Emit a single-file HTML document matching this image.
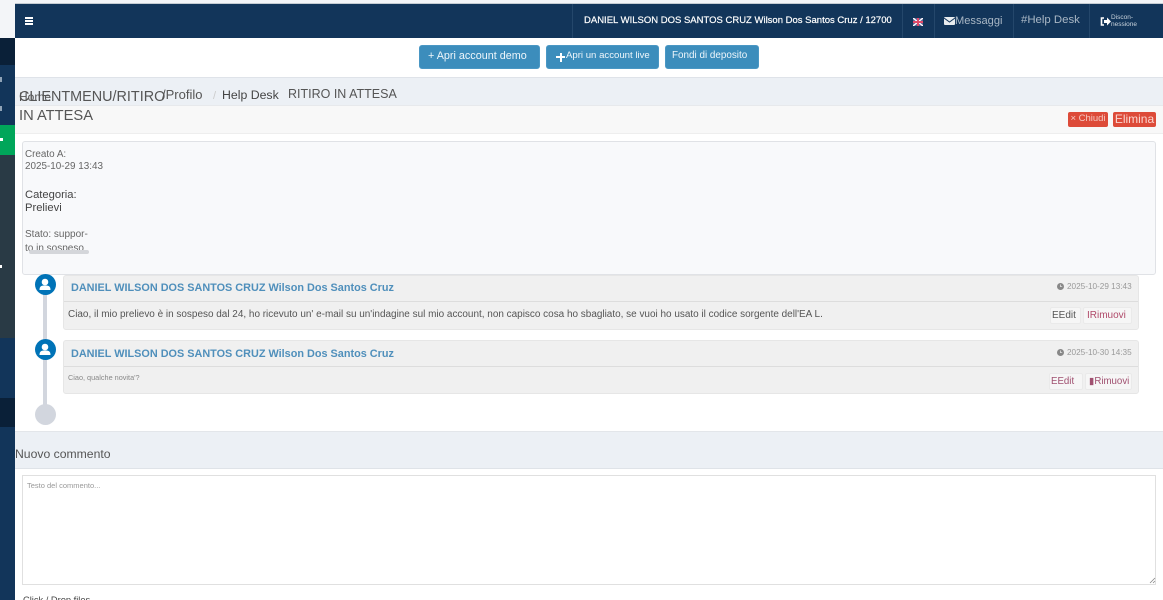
<!DOCTYPE html>
<html><head><meta charset="utf-8">
<style>
html,body{margin:0;padding:0;width:1163px;height:600px;overflow:hidden;background:#fff}
body{font-family:"Liberation Sans",sans-serif;color:#555;position:relative}
.a{position:absolute;white-space:nowrap}
.b{position:absolute;background:#3c8dbc;border:1px solid #4a97c4;border-radius:3px;color:#eef6fb;box-sizing:border-box;white-space:nowrap}
.sep{position:absolute;top:4px;width:1px;height:34px;background:#24476b}
.panel{position:absolute;left:63px;width:1076px;background:#f0f0f0;border:1px solid #e6e6e6;border-radius:3px;box-sizing:border-box}
.name{position:absolute;left:71px;font-size:10.86px;line-height:14px;font-weight:bold;color:#4f8fbb;white-space:nowrap}
.av{position:absolute;left:34.500px;width:21px;height:21px;border-radius:50%;background:#0073b7}
.btn2{position:absolute;background:#f6f6f6;border:1px solid #eaeaea;border-radius:2px;box-sizing:border-box;font-size:10px;line-height:15px;height:17px;white-space:nowrap}
</style></head><body>
<!-- sidebar -->
<div class="a" style="left:0;top:0;width:15px;height:38px;background:#f3f5f8"></div>
<div class="a" style="left:0;top:38px;width:15px;height:27px;background:#0a2038"></div>
<div class="a" style="left:0;top:65px;width:15px;height:60px;background:#12355a"></div>
<div class="a" style="left:0;top:125px;width:15px;height:30px;background:#00a65a"></div>
<div class="a" style="left:0;top:155px;width:15px;height:183px;background:#293a45"></div>
<div class="a" style="left:0;top:338px;width:15px;height:60px;background:#12355a"></div>
<div class="a" style="left:0;top:398px;width:15px;height:29px;background:#0a2038"></div>
<div class="a" style="left:0;top:427px;width:15px;height:173px;background:#12355a"></div>
<div class="a" style="left:0;top:77px;width:2px;height:5px;background:#8fa3b7"></div>
<div class="a" style="left:0;top:106px;width:2px;height:5px;background:#8fa3b7"></div>
<div class="a" style="left:0;top:138px;width:3px;height:3px;background:#fff"></div>
<div class="a" style="left:0;top:265px;width:2px;height:3px;background:#fff"></div>

<!-- top bar -->
<div class="a" style="left:0;top:0;width:1163px;height:4px;background:#f3f5f8"></div>
<div class="a" style="left:15px;top:3px;width:1148px;height:1px;background:#c5ccd3"></div>
<div class="a" style="left:15px;top:4px;width:1148px;height:34px;background:#12355a"></div>
<div class="a" style="left:25px;top:17px;width:8px;height:2px;background:#fff;box-shadow:0 3px 0 #fff,0 6px 0 #fff"></div>
<div class="sep" style="left:572px"></div>
<div class="sep" style="left:902px"></div>
<div class="sep" style="left:934px"></div>
<div class="sep" style="left:1013px"></div>
<div class="sep" style="left:1089px"></div>
<div class="a" style="left:584px;top:15px;font-size:9.500px;line-height:12px;color:#fff;font-weight:400;-webkit-text-stroke:.2px #fff">DANIEL WILSON DOS SANTOS CRUZ Wilson Dos Santos Cruz / 12700</div>
<svg class="a" style="left:913px;top:18px" width="10" height="8" viewBox="0 0 10 8"><rect width="10" height="8" fill="#5b5f8f"/><path d="M0 0L10 8M10 0L0 8" stroke="#fff" stroke-width="1.400"/><path d="M5 0V8M0 4H10" stroke="#e04a6a" stroke-width="2"/></svg>
<svg class="a" style="left:944px;top:17px" width="11" height="8" viewBox="0 0 11 8"><rect width="11" height="8" rx="1" fill="#e8ecef"/><path d="M0 1L5.500 5L11 1" stroke="#12355a" fill="none"/></svg>
<div class="a" style="left:955px;top:14px;font-size:11.100px;line-height:14px;color:#a9b7c5">Messaggi</div>
<div class="a" style="left:1021px;top:13px;font-size:11.400px;line-height:14px;color:#a9b7c5">#Help Desk</div>
<svg class="a" style="left:1100px;top:17px" width="11" height="9" viewBox="0 0 11 9"><path d="M4 1H1.500V8H4" stroke="#fff" stroke-width="1.600" fill="none"/><path d="M4 3H7V0.500L11 4.500L7 8.500V6H4Z" fill="#fff"/></svg>
<div class="a" style="left:1111px;top:15px;font-size:6.500px;line-height:6.500px;color:#c9d3dc">Discon-<br>nessione</div>

<!-- buttons -->
<div class="b" style="left:419px;top:45px;width:121px;height:24px;font-size:10.800px;line-height:20px;padding-left:8px">+ Apri account demo</div>
<div class="b" style="left:546px;top:45px;width:113px;height:24px;font-size:9.600px;line-height:19px;padding-left:19px">Apri un account live</div>
<div class="a" style="left:556px;top:56px;width:9px;height:2px;background:#fff"></div>
<div class="a" style="left:559.500px;top:52.500px;width:2px;height:9px;background:#fff"></div>
<div class="b" style="left:665px;top:45px;width:94px;height:24px;font-size:9.900px;line-height:20px;padding-left:6px">Fondi di deposito</div>

<!-- header band -->
<div class="a" style="left:15px;top:77px;width:1148px;height:28px;background:#ecf0f5;border-top:1px solid #dfe3e9;box-sizing:border-box"></div>
<div class="a" style="left:15px;top:105px;width:1148px;height:29px;background:#f8f8f8;border-top:1px solid #e7e9ec;border-bottom:1px solid #eee;box-sizing:border-box"></div>
<div class="a" style="left:19px;top:89px;font-size:14.400px;line-height:17px;color:#555">CLIENTMENU/RITIRO</div>
<div class="a" style="left:19px;top:90px;font-size:12px;line-height:14px;color:#555">Home</div>
<div class="a" style="left:19px;top:108px;font-size:14.700px;line-height:17px;color:#555">IN ATTESA</div>
<div class="a" style="left:162px;top:87px;font-size:13px;line-height:16px;color:#555">/Profilo</div>
<div class="a" style="left:213px;top:90px;font-size:11px;line-height:13px;color:#ccc">/</div>
<div class="a" style="left:222px;top:88px;font-size:12.300px;line-height:14px;color:#444">Help Desk</div>
<div class="a" style="left:288px;top:87px;font-size:12.500px;line-height:15px;color:#555">RITIRO IN ATTESA</div>
<div class="a" style="left:1068px;top:112px;width:40px;height:15px;background:#dd4b39;border-radius:2px;color:#f6c9c2;font-size:9.500px;line-height:14px;text-align:center">× Chiudi</div>
<div class="a" style="left:1113px;top:112px;width:43px;height:15px;background:#dd4b39;border-radius:2px;color:#fbd5cf;font-size:12px;line-height:15px;text-align:center">Elimina</div>

<!-- info box -->
<div class="a" style="left:22px;top:141px;width:1134px;height:134px;background:#f8f9fb;border:1px solid #e0e2e6;border-radius:3px;box-sizing:border-box"></div>
<div class="a" style="left:25px;top:149px;font-size:9.900px;line-height:12px;color:#666">Creato A:<br>2025-10-29 13:43</div>
<div class="a" style="left:25px;top:189px;font-size:11.200px;line-height:13px;color:#444">Categoria:<br>Prelievi</div>
<div class="a" style="left:25px;top:228px;font-size:10px;line-height:13.500px;color:#666">Stato: suppor-<br>to in sospeso</div>
<div class="a" style="left:29px;top:250px;width:60px;height:4px;background:#d4d6da;border-radius:2px"></div>

<!-- timeline -->
<div class="a" style="left:43px;top:290px;width:4px;height:120px;background:#d2d6de"></div>
<div class="av" style="top:274px"></div>
<div class="av" style="top:339px"></div>
<svg class="a" style="left:35px;top:274.500px" width="20" height="20" viewBox="0 0 20 20"><circle cx="10" cy="7" r="3.300" fill="#fff"/><path d="M4.500 15C4.500 11 6.500 10.500 10 10.500S15.500 11 15.500 15Z" fill="#fff"/></svg>
<svg class="a" style="left:35px;top:339.500px" width="20" height="20" viewBox="0 0 20 20"><circle cx="10" cy="7" r="3.300" fill="#fff"/><path d="M4.500 15C4.500 11 6.500 10.500 10 10.500S15.500 11 15.500 15Z" fill="#fff"/></svg>
<div class="a" style="left:34.500px;top:404px;width:21px;height:21px;border-radius:50%;background:#d2d6de"></div>

<div class="panel" style="top:275px;height:55px"></div>
<div class="a" style="left:64px;top:301px;width:1074px;height:1px;background:#ddd"></div>
<div class="name" style="top:281px">DANIEL WILSON DOS SANTOS CRUZ Wilson Dos Santos Cruz</div>
<svg class="a" style="left:1057px;top:283px" width="7" height="7" viewBox="0 0 7 7"><circle cx="3.500" cy="3.500" r="3.500" fill="#888"/><path d="M3.500 1.500V3.700H5.200" stroke="#f0f0f0" stroke-width=".7" fill="none"/></svg>
<div class="a" style="left:1067px;top:282px;font-size:8.200px;line-height:10px;color:#999">2025-10-29 13:43</div>
<div class="a" style="left:68px;top:308px;font-size:9.960px;line-height:13px;color:#555">Ciao, il mio prelievo è in sospeso dal 24, ho ricevuto un' e-mail su un'indagine sul mio account, non capisco cosa ho sbagliato, se vuoi ho usato il codice sorgente dell'EA L.</div>
<div class="btn2" style="left:1050px;top:307px;width:31px;height:17px;color:#555;padding-left:1px">EEdit</div>
<div class="btn2" style="left:1083px;top:307px;width:49px;height:17px;color:#b04a6a;padding-left:3px">IRimuovi</div>

<div class="panel" style="top:340px;height:54px"></div>
<div class="a" style="left:64px;top:366px;width:1074px;height:1px;background:#ddd"></div>
<div class="name" style="top:347px">DANIEL WILSON DOS SANTOS CRUZ Wilson Dos Santos Cruz</div>
<svg class="a" style="left:1057px;top:349px" width="7" height="7" viewBox="0 0 7 7"><circle cx="3.500" cy="3.500" r="3.500" fill="#888"/><path d="M3.500 1.500V3.700H5.200" stroke="#f0f0f0" stroke-width=".7" fill="none"/></svg>
<div class="a" style="left:1067px;top:348px;font-size:8.200px;line-height:10px;color:#999">2025-10-30 14:35</div>
<div class="a" style="left:68px;top:373px;font-size:7.300px;line-height:9px;color:#888">Ciao, qualche novita'?</div>
<div class="btn2" style="left:1049px;top:373px;width:34px;color:#a05070;font-size:9.700px;padding-left:1px">EEdit</div>
<div class="btn2" style="left:1085px;top:373px;width:47px;color:#a05070;font-size:9.700px;padding-left:3px">▮Rimuovi</div>

<!-- new comment -->
<div class="a" style="left:15px;top:431px;width:1148px;height:38px;background:#ecf0f5;border-top:1px solid #e3e6ea;border-bottom:1px solid #dfe3e8;box-sizing:border-box"></div>
<div class="a" style="left:15px;top:447px;font-size:12.200px;line-height:15px;color:#555">Nuovo commento</div>
<div class="a" style="left:22px;top:475px;width:1134px;height:110px;background:#fff;border:1px solid #e0e0e0;box-sizing:border-box"></div>
<div class="a" style="left:27px;top:481px;font-size:7.500px;line-height:9px;color:#999">Testo del commento...</div>
<svg class="a" style="left:1149px;top:577px" width="7" height="7" viewBox="0 0 7 7"><path d="M1 6L6 1M4 6L6 4" stroke="#888" stroke-width=".8"/></svg>
<div class="a" style="left:23px;top:595px;font-size:9.300px;line-height:11px;color:#444">Click / Drop files</div>
</body></html>
